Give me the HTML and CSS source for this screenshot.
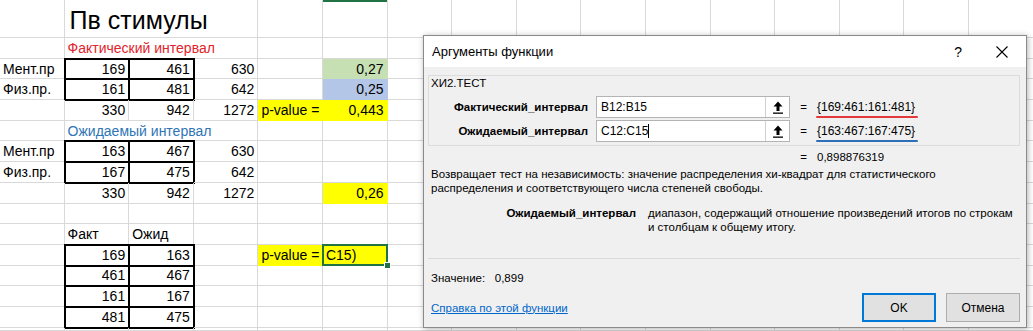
FILE: index.html
```html
<!DOCTYPE html>
<html lang="ru">

<head>
  <meta charset="UTF-8">
  <meta name="viewport" content="width=device-width, initial-scale=1.0">
  <title>Аргументы функции — ХИ2.ТЕСТ</title>
  <link rel="stylesheet" href="styles.css">
</head>

<body>
  <div class="sheet" id="sheet"></div>

  <div class="dialog">
    <div class="dialog-title">
      <span>Аргументы функции</span>
      <div class="title-btns">
        <span class="help">?</span>
        <svg class="close" width="12" height="12" viewBox="0 0 12 12">
          <path d="M0.5 0.5 L11.5 11.5 M11.5 0.5 L0.5 11.5" stroke="#000" stroke-width="1.1" fill="none" />
        </svg>
      </div>
    </div>

    <div class="dialog-body">
      <div class="group">
        <div class="group-name">ХИ2.ТЕСТ</div>
        <div class="arg">
          <span class="arg-label">Фактический_интервал</span>
          <div class="arg-input">
            <span class="arg-text">B12:B15</span>
            <span class="ref-btn">
              <svg width="10" height="13" viewBox="0 0 10 13">
                <path d="M5 0.5 L9.5 5.5 L6.5 5.5 L6.5 10 L3.5 10 L3.5 5.5 L0.5 5.5 Z" fill="#000" />
                <rect x="0" y="11.5" width="10" height="1.3" fill="#000" />
              </svg>
            </span>
          </div>
          <span class="eq">=</span>
          <span class="arg-value mark-red">{169:461:161:481}</span>
        </div>
        <div class="arg">
          <span class="arg-label">Ожидаемый_интервал</span>
          <div class="arg-input">
            <span class="arg-text">C12:C15<i class="caret"></i></span>
            <span class="ref-btn">
              <svg width="10" height="13" viewBox="0 0 10 13">
                <path d="M5 0.5 L9.5 5.5 L6.5 5.5 L6.5 10 L3.5 10 L3.5 5.5 L0.5 5.5 Z" fill="#000" />
                <rect x="0" y="11.5" width="10" height="1.3" fill="#000" />
              </svg>
            </span>
          </div>
          <span class="eq">=</span>
          <span class="arg-value mark-blue">{163:467:167:475}</span>
        </div>
      </div>

      <div class="result">
        <span class="eq">=</span>
        <span>0,898876319</span>
      </div>

      <p class="desc">Возвращает тест на независимость: значение распределения хи-квадрат для статистического<br>распределения и соответствующего числа степеней свободы.</p>

      <div class="arg-help">
        <b class="arg-help-name">Ожидаемый_интервал</b>
        <span class="arg-help-text">диапазон, содержащий отношение произведений итогов по строкам<br>и столбцам к общему итогу.</span>
      </div>

      <div class="sep"></div>

      <div class="value-line">Значение:&nbsp;&nbsp;&nbsp;0,899</div>

      <div class="footer">
        <a class="help-link" href="#">Справка по этой функции</a>
        <div class="buttons">
          <button class="btn ok">OK</button>
          <button class="btn">Отмена</button>
        </div>
      </div>
    </div>
  </div>

  <script>
    // ячейки листа: номер столбца -> [текст, классы, сколько столбцов занимает]
    const rows = [
      { 1: ['Пв стимулы', 'title', 3], 5: ['', 'colsel'] },
      { 1: ['Фактический интервал', 'red', 3] },
      { 0: ['Мент.пр'], 1: ['169', 'num box'], 2: ['461', 'num box'], 3: ['630', 'num'], 5: ['0,27', 'num green'] },
      { 0: ['Физ.пр.'], 1: ['161', 'num box'], 2: ['481', 'num box'], 3: ['642', 'num'], 5: ['0,25', 'num blue'] },
      { 1: ['330', 'num'], 2: ['942', 'num'], 3: ['1272', 'num'], 4: ['p-value =', 'yellow'], 5: ['0,443', 'num yellow'] },
      { 1: ['Ожидаемый интервал', 'blue-text', 3] },
      { 0: ['Мент.пр'], 1: ['163', 'num box'], 2: ['467', 'num box'], 3: ['630', 'num'] },
      { 0: ['Физ.пр.'], 1: ['167', 'num box'], 2: ['475', 'num box'], 3: ['642', 'num'] },
      { 1: ['330', 'num'], 2: ['942', 'num'], 3: ['1272', 'num'], 5: ['0,26', 'num yellow'] },
      {},
      { 1: ['Факт'], 2: ['Ожид'] },
      { 1: ['169', 'num box'], 2: ['163', 'num box'], 4: ['p-value =', 'yellow'], 5: ['C15)', 'yellow sel'] },
      { 1: ['461', 'num box'], 2: ['467', 'num box'] },
      { 1: ['161', 'num box'], 2: ['167', 'num box'] },
      { 1: ['481', 'num box'], 2: ['475', 'num box'] },
      {}
    ];
    const totalCols = 16;
    const sheet = document.getElementById('sheet');

    rows.forEach(row => {
      let c = 0;
      while (c < totalCols) {
        const cell = document.createElement('div');
        cell.className = 'cell';
        const def = row[c];
        let span = 1;
        if (def) {
          cell.textContent = def[0];
          if (def[1]) cell.className += ' ' + def[1];
          span = def[2] || 1;
          if (span > 1) cell.style.gridColumn = 'span ' + span;
        }
        sheet.appendChild(cell);
        c += span;
      }
    });
  </script>
</body>

</html>
```

FILE: styles.css
```css
html,
body {
  margin: 0;
  padding: 0;
  height: 100%;
  overflow: hidden;
  background: #fff;
  font-family: "Liberation Sans", Arial, sans-serif;
}

/* лист Excel */
.sheet {
  display: grid;
  grid-template-columns: repeat(16, 64.6px);
  grid-template-rows: 38px repeat(14, 20.7px) 3px;
  font-size: 14px;
  color: #000;
  overflow: hidden;
  height: 331px;
}

.cell {
  box-sizing: border-box;
  border-right: 1px solid #d9d9d9;
  border-bottom: 1px solid #d9d9d9;
  padding: 0 3px;
  white-space: nowrap;
  display: flex;
  align-items: center;
  line-height: 1;
}

.cell.num {
  justify-content: flex-end;
}

.cell.title {
  font-size: 25px;
  align-items: flex-end;
  padding-bottom: 4px;
  padding-left: 5px;
}

.cell.red {
  color: #e3232b;
}

.cell.blue-text {
  color: #2e75b6;
}

.cell.box {
  outline: 2px solid #000;
  outline-offset: -1px;
}

.cell.green {
  background: #c6e0b4;
  border-color: #c6e0b4;
}

.cell.blue {
  background: #b4c6e7;
  border-color: #b4c6e7;
}

.cell.yellow {
  background: #ffff00;
  border-color: #ffff00;
}

.cell.colsel {
  box-shadow: inset 0 2px 0 #217346;
}

.cell.sel {
  position: relative;
}

.cell.sel::after {
  content: "";
  position: absolute;
  inset: -1px -1px -1px -1px;
  border: 2px solid #217346;
}

.cell.sel::before {
  content: "";
  position: absolute;
  right: -4px;
  bottom: -4px;
  width: 5px;
  height: 5px;
  background: #217346;
  border: 1px solid #fff;
  z-index: 1;
}

/* диалог аргументов */
.dialog {
  position: absolute;
  left: 423px;
  top: 35px;
  width: 602px;
  height: 291px;
  background: #f0f0f0;
  border: 1px solid #8a8a8a;
  box-shadow: 1px 1px 6px rgba(0, 0, 0, 0.3);
  font-size: 11.5px;
  color: #000;
  display: flex;
  flex-direction: column;
}

.dialog-title {
  height: 31px;
  flex: 0 0 auto;
  background: #fff;
  display: flex;
  align-items: center;
  justify-content: space-between;
  padding-left: 8px;
  font-size: 13px;
}

.title-btns {
  display: flex;
  align-items: center;
  gap: 34px;
  padding-right: 18px;
}

.help {
  font-size: 14px;
}

.dialog-body {
  display: flex;
  flex-direction: column;
  padding: 0 6px 0 4px;
}

.group {
  margin-top: 8px;
  height: 71px;
  box-sizing: border-box;
  border: 1px solid #dcdcdc;
  padding: 1px 0 0 2px;
}

.group-name {
  line-height: 12px;
  margin-bottom: 7px;
}

.arg {
  display: flex;
  align-items: center;
  height: 22px;
  margin-bottom: 2px;
}

.arg-label {
  width: 165px;
  text-align: right;
  font-weight: bold;
  padding-right: 8px;
  box-sizing: border-box;
}

.arg-input {
  width: 194px;
  height: 22px;
  box-sizing: border-box;
  background: #fff;
  border: 1px solid #b4b4b4;
  display: flex;
  align-items: center;
}

.arg-text {
  flex: 1;
  padding-left: 4px;
  font-size: 12px;
  display: flex;
  align-items: center;
}

.caret {
  display: inline-block;
  width: 1px;
  height: 14px;
  background: #000;
}

.ref-btn {
  width: 23px;
  height: 20px;
  border-left: 1px solid #d0d0d0;
  display: flex;
  align-items: center;
  justify-content: center;
}

.eq {
  width: 27px;
  text-align: center;
}

.arg-value {
  font-size: 12px;
  color: #000;
  position: relative;
}

.mark-red::after,
.mark-blue::after {
  content: "";
  position: absolute;
  left: -1px;
  right: -3px;
  bottom: -4px;
  height: 2px;
  border-radius: 1px;
}

.mark-red::after {
  background: #e3383c;
}

.mark-blue::after {
  background: #2f6fb8;
}

.result {
  display: flex;
  margin-top: 4px;
  padding-left: 362px;
  line-height: 14px;
}

.desc {
  margin: 3px 0 0 3px;
  line-height: 14px;
}

.arg-help {
  display: flex;
  margin-top: 11px;
  line-height: 14px;
}

.arg-help-name {
  width: 220px;
  text-align: right;
  padding-right: 12px;
  box-sizing: border-box;
}

.sep {
  height: 1px;
  background: #dadada;
  margin-top: 24px;
}

.value-line {
  margin: 12px 0 0 3px;
  line-height: 14px;
}

.footer {
  display: flex;
  align-items: center;
  justify-content: space-between;
  margin-top: 8px;
  padding-left: 3px;
}

.help-link {
  color: #0066cc;
  text-decoration: underline;
}

.buttons {
  display: flex;
  gap: 10px;
}

.btn {
  width: 74px;
  height: 29px;
  box-sizing: border-box;
  background: #e1e1e1;
  border: 1px solid #adadad;
  font-family: inherit;
  font-size: 12px;
  color: #000;
  padding: 0;
}

.btn.ok {
  border: 2px solid #0078d7;
}
```
